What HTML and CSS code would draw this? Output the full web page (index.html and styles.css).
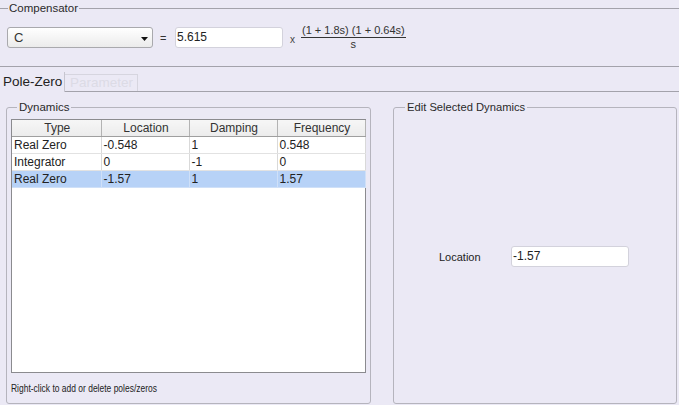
FILE: index.html
```html
<!DOCTYPE html>
<html>
<head>
<meta charset="utf-8">
<link rel="stylesheet" href="styles.css">
</head>
<body>
<fieldset class="comp">
  <legend class="legend comp-legend">Compensator</legend>
  <div class="comp-row">
    <div class="select">
      <span class="select-text">C</span>
      <svg class="select-arrow" width="7" height="4" viewBox="0 0 7 4"><path d="M0 0H7L3.5 4Z" fill="#111"/></svg>
    </div>
    <span class="eq">=</span>
    <div class="input gain">5.615</div>
    <span class="times">x</span>
    <div class="frac">
      <span class="num">(1 + 1.8s) (1 + 0.64s)</span>
      <span class="den">s</span>
    </div>
  </div>
</fieldset>
<div class="tabs">
  <div class="tab tab-active">Pole-Zero</div>
  <div class="tab tab-disabled">Parameter</div>
</div>
<div class="panels">
  <fieldset class="group dyn">
    <legend class="legend group-legend">Dynamics</legend>
    <div class="table-box">
      <table class="grid">
        <colgroup><col class="c1"><col class="c2"><col class="c3"><col class="c4"></colgroup>
        <thead>
          <tr><th>Type</th><th>Location</th><th>Damping</th><th>Frequency</th></tr>
        </thead>
        <tbody>
          <tr><td>Real Zero</td><td>-0.548</td><td>1</td><td>0.548</td></tr>
          <tr><td>Integrator</td><td>0</td><td>-1</td><td>0</td></tr>
          <tr class="sel"><td>Real Zero</td><td>-1.57</td><td>1</td><td>1.57</td></tr>
        </tbody>
      </table>
    </div>
    <div class="hint"><span class="hint-text">Right-click to add or delete poles/zeros</span></div>
  </fieldset>
  <fieldset class="group edit">
    <legend class="legend group-legend edit-legend">Edit Selected Dynamics</legend>
    <div class="edit-row">
      <span class="edit-label">Location</span>
      <div class="input loc">-1.57</div>
    </div>
  </fieldset>
</div>
</body>
</html>
```

FILE: styles.css
```css
html, body {
  margin: 0;
  padding: 0;
}
body {
  width: 679px;
  height: 405px;
  overflow: hidden;
  background: #ebe9f5;
  font-family: "Liberation Sans", Arial, sans-serif;
  font-size: 12px;
  color: #222;
}
fieldset {
  margin: 0;
  min-width: 0;
  box-sizing: border-box;
}
.legend {
  line-height: 16px;
  height: 16px;
  font-size: 11.5px;
  color: #2a2a2a;
}
.comp {
  border: none;
  border-top: 1px solid #a3a2ab;
  border-bottom: 1px solid #a3a2ab;
  padding: 11px 0 17px 7px;
  height: 67px;
}
.comp-legend {
  padding: 0 1px;
  margin-left: 1px;
}
.comp-row {
  display: flex;
  align-items: center;
  height: 21px;
}
.select {
  width: 146px;
  height: 21px;
  box-sizing: border-box;
  border: 1px solid #a9a9ad;
  border-radius: 3px;
  background: linear-gradient(#ffffff, #ebebeb);
  display: flex;
  align-items: center;
  justify-content: space-between;
  padding: 0 4px 0 6px;
}
.select-text {
  font-size: 13px;
  color: #333;
}
.select-arrow {
  margin-top: 2px;
}
.eq {
  margin-left: 7px;
  width: 15px;
  font-size: 11px;
  color: #333;
}
.input {
  box-sizing: border-box;
  height: 21px;
  background: #fff;
  border: 1px solid #d3d2dc;
  border-radius: 3px;
  line-height: 19px;
  padding-left: 1px;
  font-size: 12px;
  color: #222;
}
.gain {
  width: 108px;
}
.times {
  margin-left: 7px;
  width: 11px;
  font-size: 10px;
  color: #444;
  margin-top: 3px;
}
.frac {
  display: flex;
  flex-direction: column;
  align-items: center;
  font-size: 11px;
  color: #333;
  line-height: 11px;
  margin-top: 0;
}
.num {
  border-bottom: 1px solid #333;
  padding: 0 1px 1px;
}
.den {
  padding-top: 1px;
}
.tabs {
  display: flex;
  align-items: flex-end;
  height: 25px;
  box-sizing: border-box;
  border-bottom: 1px solid #a3a2ab;
}
.tab {
  box-sizing: border-box;
  font-size: 13.5px;
}
.tab-active {
  width: 65px;
  height: 20px;
  padding-left: 3px;
  line-height: 19px;
  color: #222;
  border-right: 1px solid #c6c5cf;
  background: #ebe9f5;
  margin-bottom: -1px;
}
.tab-disabled {
  width: 73px;
  height: 17px;
  padding-left: 5px;
  color: #dcdbe5;
  border-top: 1px solid #d6d5df;
  border-right: 1px solid #d6d5df;
  line-height: 16px;
}
.panels {
  display: flex;
  padding-top: 7px;
  padding-left: 6px;
  gap: 22px;
}
.group {
  border: 1px solid #b5b4bd;
  border-radius: 3px;
  height: 305px;
  padding: 3px 4px 0 4px;
}
.group-legend {
  padding: 0 2px;
  margin-left: 6px;
}
.dyn {
  width: 365px;
}
.edit {
  width: 284px;
}
.edit-legend {
  margin-left: 7px;
  font-size: 11.2px;
}
.table-box {
  width: 355px;
  height: 254px;
  box-sizing: border-box;
  background: #fff;
  border: 1px solid #8b8b8f;
  margin-top: 1px;
}
.grid {
  border-collapse: collapse;
  table-layout: fixed;
  width: 353px;
}
.c1 { width: 89px; }
.c2 { width: 88px; }
.c3 { width: 88px; }
.c4 { width: 88px; }
.grid th, .grid td {
  height: 16px;
  padding: 0 0 0 2px;
  font-weight: normal;
  font-size: 12px;
  line-height: 16px;
  white-space: nowrap;
  overflow: hidden;
  box-sizing: border-box;
}
.grid th {
  text-align: center;
  color: #333;
  background: linear-gradient(#f6f6f6, #ececec);
  border-right: 1px solid #b3b3b3;
  border-bottom: 1px solid #9f9f9f;
}
.grid td {
  color: #222;
  border-right: 1px solid #d9d9d9;
  border-bottom: 1px solid #e2e2e2;
}
.grid tr.sel td {
  background: #b7d2f7;
  border-right-color: #cfe0f8;
  border-bottom-color: #cfe0f8;
}
.hint {
  line-height: 14px;
  margin-top: 8px;
  height: 14px;
}
.hint-text {
  display: inline-block;
  font-size: 11px;
  color: #222;
  transform: scaleX(0.77);
  transform-origin: left center;
  white-space: nowrap;
}
.edit-row {
  display: flex;
  align-items: center;
  padding-top: 128px;
  padding-left: 41px;
}
.edit-label {
  width: 72px;
  font-size: 11px;
  color: #222;
}
.loc {
  width: 118px;
}
```
